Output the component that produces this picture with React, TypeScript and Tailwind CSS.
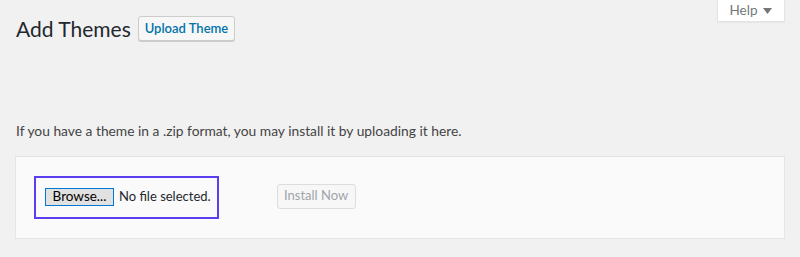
import React from 'react';

const App: React.FC = () => {
  return (
    <div className="relative w-[800px] h-[257px] overflow-hidden bg-[#f1f1f1] font-['Lato',sans-serif] text-[#23282d]">
      {/* Help tab */}
      <div className="absolute right-[15px] top-0 w-[68px] h-[22px] bg-white border border-t-0 border-[#e2e4e7] shadow-[0_1px_1px_rgba(0,0,0,0.04)] flex items-center justify-center gap-[6px] text-[13.5px] text-[#72777c]">
        <span>Help</span>
        <svg width="9" height="6" viewBox="0 0 9 6"><path d="M0 0h9L4.5 6z" fill="#72777c" /></svg>
      </div>

      <div className="pl-[16px] pr-[15px] pt-[16px]">
        <div className="flex items-center gap-[8px]">
          <h1 className="w-[114px] text-[21px] leading-[25px] font-normal text-[#23282d] -mt-[1px] whitespace-nowrap">Add Themes</h1>
          <button className="h-[25px] w-[97px] bg-[#f7f7f7] border border-[#ccc] rounded-[3px] text-[13px] font-semibold text-[#0073aa] leading-none shadow-[0_1px_0_#ccc]">
            Upload Theme
          </button>
        </div>

        <p className="mt-[80px] text-[13.8px] leading-[19px] text-[#444]">
          If you have a theme in a .zip format, you may install it by uploading it here.
        </p>

        <div className="mt-[16px] -ml-[1px] h-[83px] bg-[#fafafa] border border-[#e5e5e5] flex items-center pl-[18px]">
          <div className="h-[43px] -mt-[1px] border-2 border-[#5b3ef0] flex items-center pl-[9px] pr-[6px] gap-[5px]">
            <button className="h-[18px] w-[69px] bg-[#e1e1e1] border border-[#0078d7] text-[13.5px] leading-none text-black flex items-center justify-center">
              Browse...
            </button>
            <span className="text-[13px] text-[#23282d]">No file selected.</span>
          </div>
          <button className="ml-[58px] -mt-[3px] h-[25px] w-[79px] bg-[#f7f7f7] border border-[#ddd] rounded-[3px] text-[13px] text-[#a0a5aa]">
            Install Now
          </button>
        </div>
      </div>
    </div>
  );
};

export default App;
